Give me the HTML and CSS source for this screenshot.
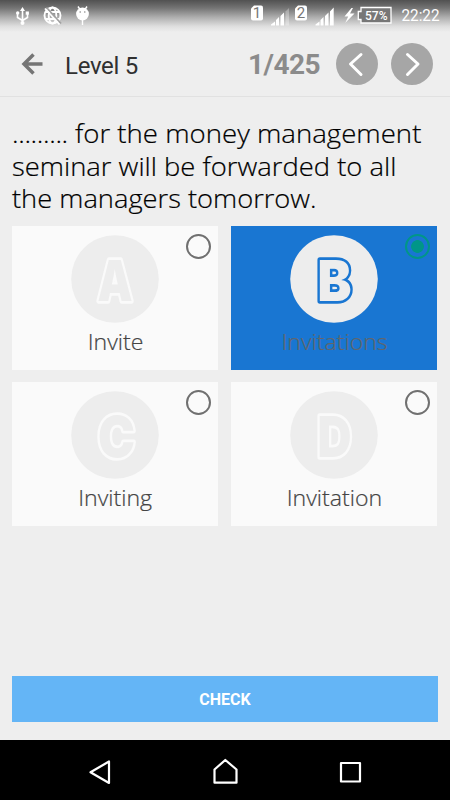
FILE: index.html
```html
<!DOCTYPE html>
<html lang="en">
<head>
<meta charset="utf-8">
<title>Level 5</title>
<link rel="stylesheet" href="styles.css">
</head>
<body>
<div class="phone">
  <div class="status">
    <svg class="status-left" width="100" height="32" viewBox="0 0 100 32" fill="none" stroke="#fff">
      <path d="M22.500 9v13M17.500 13v4.500l5 3 5-3V13" stroke-width="1.600"/>
      <path d="M20 11l2.500-4 2.500 4z" fill="#fff" stroke="none"/>
      <circle cx="17.700" cy="13" r="1.700" fill="#fff" stroke="none"/>
      <path d="M25.700 11.500h3.200v3.200h-3.200z" fill="#fff" stroke="none"/>
      <circle cx="22.500" cy="23" r="2" fill="#fff" stroke="none"/>
      <g stroke-width="1.900"><circle cx="52.500" cy="15.500" r="8"/><ellipse cx="52.500" cy="15.500" rx="3.800" ry="8"/><path d="M45 12h15M45 19h15"/></g>
      <path d="M46.500 7.500l14.500 16" stroke="#a0a0a0" stroke-width="1.800"/><path d="M45 8.500l14.500 16" stroke-width="1.800"/>
      <circle cx="82.500" cy="14" r="6.400" fill="#fff" stroke="none"/>
      <path d="M78 6.500l2 3M87 6.500l-2 3M82.500 20v5" stroke-width="1.400"/>
      <circle cx="80.200" cy="12" r=".8" fill="#888" stroke="none"/><circle cx="84.800" cy="12" r=".8" fill="#888" stroke="none"/>
    </svg>
    <svg class="status-right" width="205" height="32" viewBox="245 0 205 32">
      <path d="M254 5.500h7q2 0 2 2v11q0 2-2 2h-8q-2 0-2-2v-10z" fill="#fff"/>
      <path d="M298 5.500h7q2 0 2 2v11q0 2-2 2h-8q-2 0-2-2v-10z" fill="#fff"/>
      <text class="sim" x="257" y="18">1</text><text class="sim" x="301" y="18">2</text>
      <path d="M271 25.500v-1l4-3v4zM276 25.500v-5.500l3-3v8.500zM280.500 25.500v-9.500l3.500-3.500v13z" fill="#fff"/>
      <path d="M285.500 25.500v-14l3.500-3.500v17.500z" fill="#fff" opacity=".3"/>
      <path d="M315.500 25.500v-1l4-3v4zM320.500 25.500v-5.500l3-3v8.500zM325 25.500v-9.500l3.500-3.500v13zM330 25.500v-14l3.700-4v18z" fill="#fff"/>
      <path d="M351.500 8l-7 8.500h3.700l-3 6.500 9.300-9.500h-4.500l3-5.500z" fill="#fff"/>
      <path d="M361 7.500h30v15.500h-30v-3.500h-2.700v-8h2.700z" fill="#777" stroke="#fff" stroke-width="1.300"/>
      <text class="battery" x="376.300" y="19.800" textLength="22.500" lengthAdjust="spacingAndGlyphs">57%</text>
      <text class="clock" x="401.500" y="21.300" textLength="38" lengthAdjust="spacingAndGlyphs">22:22</text>
    </svg>
  </div>
  <header class="bar">
    <svg class="back" width="22" height="22" viewBox="0 0 22 22" fill="none" stroke="#757575" stroke-width="3.500"><path d="M12.500 1.500L3 11l9.500 9.500M3 11h18.500"/></svg>
    <h1 class="title">Level 5</h1>
    <span class="count">1/425</span>
    <button class="round" aria-label="Previous"><svg width="42" height="42" viewBox="0 0 42 42"><path d="M25 11.500L14.500 21 25 31.500"/></svg></button>
    <button class="round" aria-label="Next"><svg width="42" height="42" viewBox="0 0 42 42"><path d="M16.500 11.500L27 21 16.500 31.500"/></svg></button>
  </header>
  <main class="content">
    <p class="question"><span class="l1"><i class="dots">.........</i> for the money management</span> <span class="l2">seminar will be forwarded to all</span> <span class="l3">the managers tomorrow.</span></p>
    <div class="answers">
      <div class="card"><svg class="letter" width="88" height="88" viewBox="0 0 88 88"><circle cx="44" cy="44" r="43.800"/><text x="44" y="66" textLength="35" lengthAdjust="spacingAndGlyphs">A</text></svg><span class="radio"></span><span class="label">Invite</span></div>
      <div class="card selected"><svg class="letter" width="88" height="88" viewBox="0 0 88 88"><circle cx="44" cy="44" r="43.800"/><text x="44.500" y="66" textLength="34" lengthAdjust="spacingAndGlyphs">B</text></svg><span class="radio"></span><span class="label">Invitations</span></div>
      <div class="card"><svg class="letter" width="88" height="88" viewBox="0 0 88 88"><circle cx="44" cy="44" r="43.800"/><text x="45.500" y="66" textLength="37" lengthAdjust="spacingAndGlyphs">C</text></svg><span class="radio"></span><span class="label">Inviting</span></div>
      <div class="card"><svg class="letter" width="88" height="88" viewBox="0 0 88 88"><circle cx="44" cy="44" r="43.800"/><text x="44.500" y="66" textLength="34" lengthAdjust="spacingAndGlyphs">D</text></svg><span class="radio"></span><span class="label">Invitation</span></div>
    </div>
    <button class="check">CHECK</button>
  </main>
  <nav class="nav">
    <svg width="450" height="60" viewBox="0 0 450 60" fill="none" stroke="#fff" stroke-width="2.200" stroke-linejoin="round"><path d="M109 21.500v21.500L90.500 32.200z"/><path d="M214.500 42.700V29.500L225.300 20l11.200 9.500v13.200z"/><path d="M341 23h19v18.500h-19z"/></svg>
  </nav>
</div>
</body>
</html>
```
FILE: styles.css
```css
* { box-sizing: border-box; }
body { margin: 0; background: #eee; font-family: Roboto, sans-serif; }
.phone { width: 450px; height: 800px; display: flex; flex-direction: column; background: #eee; overflow: hidden; }
.status { height: 32px; display: flex; justify-content: space-between; background: linear-gradient(#515151, #747474 25%, #b0b0b0 55%, #dedede 82%, #eee); }
.sim { font: 15px Roboto, sans-serif; fill: #777; text-anchor: middle; }
.battery { font: 500 13px Roboto, sans-serif; fill: #fff; text-anchor: middle; }
.clock { font: 16px Roboto, sans-serif; fill: #fff; }
.bar { height: 65px; display: flex; align-items: center; padding: 0 17px 0 21px; border-bottom: 1px solid #e1e1e1; }
.title { margin: 4px 0 0 22px; font-size: 24px; line-height: 28px; font-weight: 400; color: #303030; letter-spacing: -.3px; }
.count { margin: 2px 16px 0 auto; font-size: 28px; line-height: 32px; font-weight: 700; color: #8b8b8b; letter-spacing: -.55px; }
.round { width: 42px; height: 42px; padding: 0; border: 0; border-radius: 50%; background: #a6a6a6; }
.round + .round { margin-left: 13px; }
.round svg { display: block; fill: none; stroke: #fff; stroke-width: 3; stroke-linecap: round; stroke-linejoin: round; }
.content { height: 643px; padding: 20px 12px 18px; display: flex; flex-direction: column; }
.question { margin: 0; height: 109px; font: 300 26px/32.700px "Open Sans", sans-serif; color: #000; white-space: nowrap; -webkit-text-stroke: .2px #000; }
.question span { display: block; transform-origin: 0 0; }
.dots { font-style: normal; letter-spacing: -.35px; }
.l1 { transform: scaleX(1.061); }
.l2 { transform: scaleX(1.053); }
.l3 { transform: scaleX(1.049); }
.answers { display: grid; grid-template-columns: 206px 206px; grid-auto-rows: 144px; gap: 12px 13px; padding-left: .4px; }
.card { position: relative; background: #fafafa; display: flex; flex-direction: column; align-items: center; padding-top: 9px; }
.letter { flex: none; }
.letter circle { fill: #ededed; }
.letter text { font: 900 57px Inter, sans-serif; text-anchor: middle; fill: #ededed; stroke: #fafafa; stroke-width: 5.500; stroke-linejoin: round; paint-order: stroke; }
.label { font: 300 22px/30px "Open Sans", sans-serif; color: #444; margin-top: 3px; white-space: nowrap; transform: scaleX(1.05); -webkit-text-stroke: .2px; }
.radio { position: absolute; right: 7px; top: 8px; width: 25px; height: 25px; border: 2.500px solid #707070; border-radius: 50%; }
.selected { background: #1976d2; }
.selected .letter text { stroke: #1976d2; }
.selected .label { color: #62666b; }
.selected .radio { border-color: #009688; background: radial-gradient(circle, #009688 6px, transparent 6.700px); }
.check { margin-top: auto; height: 46px; border: 0; background: #64b5f6; color: #fff; font: 700 16px Roboto, sans-serif; }
.nav { height: 60px; background: #000; }
.nav svg { display: block; }
```
